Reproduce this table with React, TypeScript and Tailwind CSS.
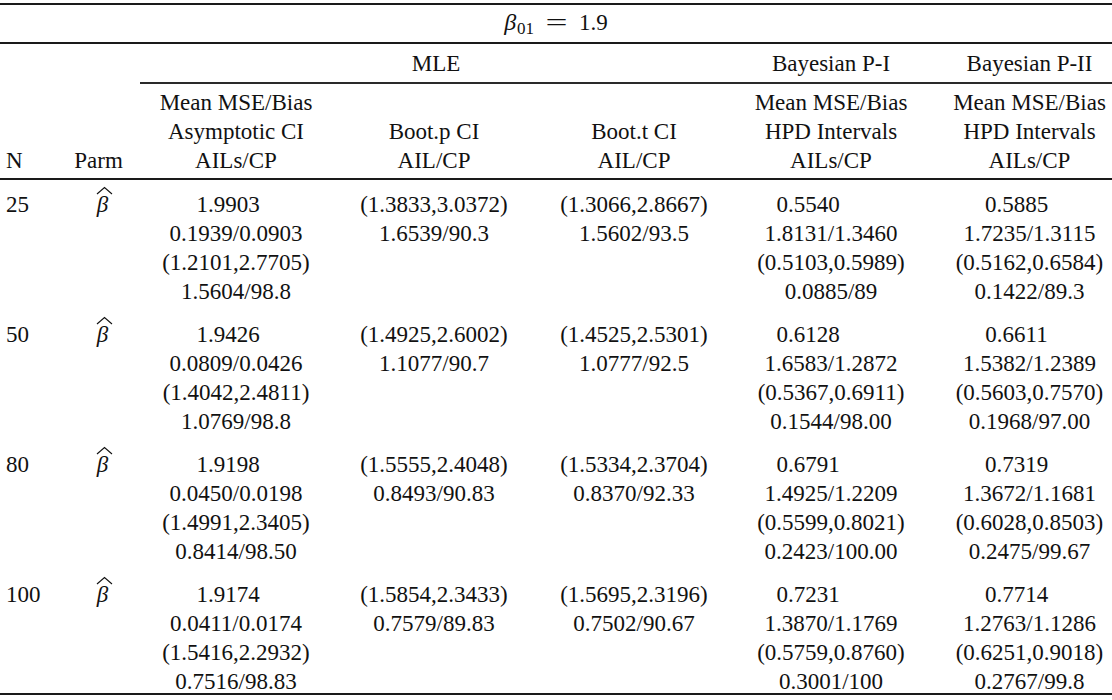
import React from "react";

type Cell = string[];
interface Row {
  n: string;
  cols: Cell[];
}

const rows: Row[] = [
  {
    n: "25",
    cols: [
      ["1.9903", "0.1939/0.0903", "(1.2101,2.7705)", "1.5604/98.8"],
      ["(1.3833,3.0372)", "1.6539/90.3"],
      ["(1.3066,2.8667)", "1.5602/93.5"],
      ["0.5540", "1.8131/1.3460", "(0.5103,0.5989)", "0.0885/89"],
      ["0.5885", "1.7235/1.3115", "(0.5162,0.6584)", "0.1422/89.3"],
    ],
  },
  {
    n: "50",
    cols: [
      ["1.9426", "0.0809/0.0426", "(1.4042,2.4811)", "1.0769/98.8"],
      ["(1.4925,2.6002)", "1.1077/90.7"],
      ["(1.4525,2.5301)", "1.0777/92.5"],
      ["0.6128", "1.6583/1.2872", "(0.5367,0.6911)", "0.1544/98.00"],
      ["0.6611", "1.5382/1.2389", "(0.5603,0.7570)", "0.1968/97.00"],
    ],
  },
  {
    n: "80",
    cols: [
      ["1.9198", "0.0450/0.0198", "(1.4991,2.3405)", "0.8414/98.50"],
      ["(1.5555,2.4048)", "0.8493/90.83"],
      ["(1.5334,2.3704)", "0.8370/92.33"],
      ["0.6791", "1.4925/1.2209", "(0.5599,0.8021)", "0.2423/100.00"],
      ["0.7319", "1.3672/1.1681", "(0.6028,0.8503)", "0.2475/99.67"],
    ],
  },
  {
    n: "100",
    cols: [
      ["1.9174", "0.0411/0.0174", "(1.5416,2.2932)", "0.7516/98.83"],
      ["(1.5854,2.3433)", "0.7579/89.83"],
      ["(1.5695,2.3196)", "0.7502/90.67"],
      ["0.7231", "1.3870/1.1769", "(0.5759,0.8760)", "0.3001/100"],
      ["0.7714", "1.2763/1.1286", "(0.6251,0.9018)", "0.2767/99.8"],
    ],
  },
];

const gridCols = "grid grid-cols-[60px_77px_198px_198px_202px_192px_185px]";

const colPad = ["", "", "", "", "pl-[20px]"];

function BetaHat() {
  return (
    <span className="relative inline-block italic text-[23px]">
      <svg
        className="absolute left-[-1px] top-[-4px]"
        width="17"
        height="9"
        viewBox="0 0 17 9"
      >
        <path d="M1 8 L8.5 1.5 L16 8" fill="none" stroke="#111" strokeWidth="1.1" />
      </svg>
      β
    </span>
  );
}

function firstShift(colIdx: number): string {
  if (colIdx === 0) return "pr-[16px]";
  if (colIdx === 3) return "pr-[46px]";
  if (colIdx === 4) return "pr-[26px]";
  return "";
}

export default function App() {
  return (
    <div
      className="w-[1112px] h-[700px] bg-white text-[#111] overflow-hidden"
      style={{ fontFamily: '"Liberation Serif", "Times New Roman", serif' }}
    >
      <div className="pt-[3px] text-[23px] leading-[29px]">
        {/* top rule */}
        <div className="h-[2px] bg-[#1a1a1a]" />
        {/* beta01 row */}
        <div className="h-[37px] flex items-center justify-center">
          <span className="flex items-baseline">
            <span className="italic text-[24px]">β</span>
            <span className="text-[17px] relative top-[4px] ml-[1px]">01</span>
            <span className="ml-[16px] inline-block scale-x-[1.7]">=</span>
            <span className="ml-[16px]">1.9</span>
          </span>
        </div>
        <div className="h-[2px] bg-[#1a1a1a]" />
        {/* group header row */}
        <div className={`${gridCols} h-[38px] items-center`}>
          <div />
          <div />
          <div className="col-span-3 text-center">MLE</div>
          <div className="text-center">Bayesian P-I</div>
          <div className="text-center pl-[20px]">Bayesian P-II</div>
        </div>
        <div className="ml-[140px] h-[2px] bg-[#2a2a2a]" />
        {/* column header */}
        <div className={`${gridCols} pt-[4px] pb-[3px]`}>
          <div className="flex flex-col justify-end pl-[6px]">N</div>
          <div className="flex flex-col justify-end text-center">Parm</div>
          <div className="text-center">
            <div>Mean MSE/Bias</div>
            <div>Asymptotic CI</div>
            <div>AILs/CP</div>
          </div>
          <div className="text-center flex flex-col justify-end">
            <div>Boot.p CI</div>
            <div>AIL/CP</div>
          </div>
          <div className="text-center flex flex-col justify-end">
            <div>Boot.t CI</div>
            <div>AIL/CP</div>
          </div>
          <div className="text-center">
            <div>Mean MSE/Bias</div>
            <div>HPD Intervals</div>
            <div>AILs/CP</div>
          </div>
          <div className="text-center pl-[20px]">
            <div>Mean MSE/Bias</div>
            <div>HPD Intervals</div>
            <div>AILs/CP</div>
          </div>
        </div>
        <div className="h-[2px] bg-[#1a1a1a]" />
        {/* data rows */}
        <div className="pt-[10px]">
          {rows.map((r, ri) => (
            <div
              key={r.n}
              className={`${gridCols} ${ri === rows.length - 1 ? "pb-0" : "pb-[14px]"}`}
            >
              <div className="pl-[6px]">{r.n}</div>
              <div className="text-center pl-[8px]">
                <BetaHat />
              </div>
              {r.cols.map((c, ci) => (
                <div key={ci} className={`text-center ${colPad[ci]}`}>
                  {c.map((line, li) => (
                    <div key={li} className={li === 0 ? firstShift(ci) : ""}>
                      {line}
                    </div>
                  ))}
                </div>
              ))}
            </div>
          ))}
        </div>
        <div className="-mt-[3px] h-[2px] bg-[#1a1a1a]" />
      </div>
    </div>
  );
}
